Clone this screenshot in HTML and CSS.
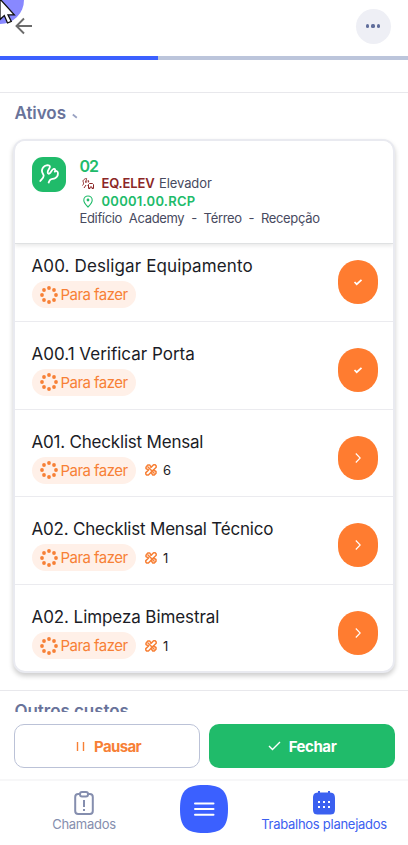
FILE: index.html
```html
<!DOCTYPE html>
<html lang="pt-BR">
<head>
<meta charset="utf-8">
<title>Trabalhos planejados</title>
<link rel="stylesheet" href="styles.css">
</head>
<body>
<svg width="0" height="0" class="defs">
  <symbol id="todo" viewBox="0 0 18 18"><g fill="currentColor"><circle cx="9" cy="2" r="1.900"/><circle cx="14" cy="4" r="1.900"/><circle cx="16" cy="9" r="1.900"/><circle cx="14" cy="14" r="1.900"/><circle cx="9" cy="16" r="1.900"/><circle cx="4" cy="14" r="1.900"/><circle cx="2" cy="9" r="1.900"/><circle cx="4" cy="4" r="1.900"/></g></symbol>
  <symbol id="parts" viewBox="0 0 12 12"><g fill="none" stroke="currentColor" stroke-width="1.5" stroke-linejoin="round" stroke-linecap="round"><path d="M1 3.200 2.800 1h2L6 3.400 8.600.8h1.600l1 1.200v1.200L3.400 11H1.600L.8 10V8.600L3.600 6 1 4.600Z"/><path d="M8.300 6 11 7.500v1.800L9.300 11H7.800L6 8.300M3 3l6 6"/></g></symbol>
  <symbol id="check" viewBox="0 0 10 8"><path d="m1.500 4 2.200 2.200 4.800-4.400" fill="none" stroke="currentColor" stroke-width="1.700"/></symbol>
  <symbol id="next" viewBox="0 0 8 12"><path d="m1.800 1.500 4.400 4.500-4.400 4.500" fill="none" stroke="currentColor" stroke-width="1.100"/></symbol>
  <symbol id="asset" viewBox="0 0 20 20"><path d="M1.300 17C3 15 5.200 13.500 4.600 11.300 4.200 9.800 2.600 8.500 3 6.200 3.400 3.800 5 2 7.500 1.400 9.500.9 11.300 1.700 10.800 3.300 10.300 5 8.800 6.300 8.700 8c-.1 1.800 1.300 2.300 2.500.9 1.300-1.500 1.800-3.600 3.600-4 1.500-.2 1.700 1.300 1 2.700.9-.9 2.700-.8 3 .8.400 2.200-.8 4.800-2.800 5.800-1.700.9-3.500.5-4.700 1.500-.8.700-1 1.500-1.600 2.800" fill="none" stroke="currentColor" stroke-width="1.800" stroke-linecap="round" stroke-linejoin="round"/></symbol>
</svg>
<header class="top">
  <svg class="back" width="18" height="18" viewBox="0 0 18 18"><path d="M17 9H2M9 1.500 1.500 9 9 16.500" fill="none" stroke="currentColor" stroke-width="1.900"/></svg>
  <button class="more"><i></i><i></i><i></i></button>
  <svg class="pointer" width="26" height="26" viewBox="0 0 26 26"><circle cx="0" cy="0" r="24" fill="#8888ff"/><path d="M0-1v20.500l4.300-4 3.200 7.500 3.800-1.600L8 14.800h6.300Z" fill="#fff" stroke="#111" stroke-width="1.300"/></svg>
</header>
<div class="progress"><div class="done"></div></div>
<main>
  <h2 class="sect">Ativos <svg width="6" height="6" viewBox="0 0 6 6"><path d="m.8 1.500 4 3.200" stroke="#99a2c2" stroke-width="1.800"/></svg></h2>
  <section class="card">
    <div class="head">
      <div class="logo"><svg width="20" height="20"><use href="#asset"/></svg></div>
      <div class="info">
        <div class="num">02</div>
        <div class="line code"><svg width="14" height="13" viewBox="0 0 14 13"><g fill="none" stroke="currentColor" stroke-width="1"><path d="M1.500 8.500C4 6 1 4.500 2.500 3 4 1.500 6.500.8 5.500 2.500L4.500 5C4.500 6.200 5.500 5 7 3.500l.8.500-.5 1.500M3 11l2-3"/><path d="M7.500 11.500v-4l1-1h3l1 1v4H11V10H9v1.500ZM6.500 8.500h1"/></g></svg><b>EQ.ELEV</b><span>Elevador</span></div>
        <div class="line loc"><svg width="14" height="13" viewBox="0 0 14 13"><path d="M7 12C4.500 9.500 2.800 7.500 2.800 5.200a4.200 4.200 0 0 1 8.400 0C11.200 7.500 9.500 9.500 7 12Z" fill="none" stroke="currentColor" stroke-width="1.100"/><circle cx="7" cy="5" r="1.400" fill="currentColor"/></svg><b>00001.00.RCP</b></div>
        <div class="place">Edifício Academy - Térreo - Recepção</div>
      </div>
    </div>
    <ul class="rows">
      <li><div><h3 class="t1">A00. Desligar Equipamento</h3><div class="meta"><span class="tag"><svg width="18" height="18"><use href="#todo"/></svg><span>Para fazer</span></span></div></div><button class="go"><svg width="10" height="8"><use href="#check"/></svg></button></li>
      <li><div><h3 class="t2">A00.1 Verificar Porta</h3><div class="meta"><span class="tag"><svg width="18" height="18"><use href="#todo"/></svg><span>Para fazer</span></span></div></div><button class="go"><svg width="10" height="8"><use href="#check"/></svg></button></li>
      <li><div><h3 class="t3">A01. Checklist Mensal</h3><div class="meta"><span class="tag"><svg width="18" height="18"><use href="#todo"/></svg><span>Para fazer</span></span><svg class="parts" width="12" height="12"><use href="#parts"/></svg><span class="count">6</span></div></div><button class="go"><svg width="8" height="12"><use href="#next"/></svg></button></li>
      <li><div><h3 class="t4">A02. Checklist Mensal Técnico</h3><div class="meta"><span class="tag"><svg width="18" height="18"><use href="#todo"/></svg><span>Para fazer</span></span><svg class="parts" width="12" height="12"><use href="#parts"/></svg><span class="count">1</span></div></div><button class="go"><svg width="8" height="12"><use href="#next"/></svg></button></li>
      <li><div><h3 class="t5">A02. Limpeza Bimestral</h3><div class="meta"><span class="tag"><svg width="18" height="18"><use href="#todo"/></svg><span>Para fazer</span></span><svg class="parts" width="12" height="12"><use href="#parts"/></svg><span class="count">1</span></div></div><button class="go"><svg width="8" height="12"><use href="#next"/></svg></button></li>
    </ul>
  </section>
  <h2 class="sect costs">Outros custos</h2>
</main>
<div class="actions">
  <button class="pause"><svg width="10" height="11" viewBox="0 0 10 11"><path d="M1.500 1v9M7.500 1v9" stroke="currentColor" stroke-width="1.400"/></svg><span>Pausar</span></button>
  <button class="close"><svg width="13" height="10" viewBox="0 0 13 10"><path d="m1 5 3.500 3.500L12 1" fill="none" stroke="currentColor" stroke-width="1.400"/></svg><span>Fechar</span></button>
</div>
<nav class="nav">
  <a class="item"><svg width="20" height="24" viewBox="0 0 20 24"><g fill="none" stroke="currentColor" stroke-width="2"><rect x="1.200" y="3" width="17.600" height="20" rx="3"/><rect x="6" y="1" width="8" height="4.500" rx="2" fill="#fff"/><path d="M10 9v7M10 18v2"/></g></svg><span class="calls">Chamados</span></a>
  <a class="menu"><svg width="48" height="48" viewBox="0 0 48 48"><path d="M24 0C42 0 48 6 48 24S42 48 24 48 0 42 0 24 6 0 24 0Z" fill="#3b60ff"/><path d="M15 18.500h18.500M15 24h18.500M15 29.800h18.500" stroke="#fff" stroke-width="2" stroke-linecap="round"/></svg></a>
  <a class="item active"><svg width="22" height="24" viewBox="0 0 22 24"><path d="M5 0h2v1.500h8V0h2v1.500c4 .3 5 2 5 6v10c0 5-1 6-6 6H6c-5 0-6-1-6-6v-10c0-4 1-5.700 5-6Z" fill="currentColor"/><g fill="#fff"><path d="M5 10h2v2H5zM10 10h2v2h-2zM15 10h2v2h-2zM5 15h2v2H5zM10 15h2v2h-2zM15 15h2v2h-2z"/></g></svg><span class="jobs">Trabalhos planejados</span></a>
</nav>
</body>
</html>
```
FILE: styles.css
```css
* { box-sizing: border-box; margin: 0; padding: 0; }
html, body { height: 845px; overflow: hidden; }
body { display: flex; flex-direction: column; background: #fff; font-family: Inter, "Open Sans", sans-serif; color: #1b1c26; }
button { border: 0; font: inherit; }
svg { display: block; flex: none; }
.defs { position: absolute; }
.top { position: relative; height: 56px; flex: none; display: flex; align-items: center; justify-content: space-between; padding: 0 17.500px 4px 15px; }
.back { color: #6b6b6b; }
.more { width: 35px; height: 35px; border-radius: 50%; background: #eeeff5; display: flex; align-items: center; justify-content: center; gap: 2px; }
.more i { width: 3.200px; height: 3.200px; border-radius: 50%; background: #606d9b; }
.pointer { position: absolute; left: 0; top: 0; }
.progress { height: 4px; flex: none; background: #bcc5db; }
.done { width: 158px; height: 4px; background: #3b60ff; }
main { height: 652px; flex: none; overflow: hidden; padding-top: 32px; }
.sect { height: 48px; border-top: 1px solid #e8e8ec; padding: 0 14.500px; display: flex; gap: 6px; font-size: 17px; line-height: 40px; font-weight: 600; color: #69739a; letter-spacing: -.05px; }
.sect svg { margin-top: 20px; }
.card { width: 382px; height: 534px; margin-left: 13px; margin-top: -1px; border: 2px solid #e9eaf0; border-radius: 12px; overflow: hidden; box-shadow: 0 3px 5px rgba(0,0,0,.2); background: #fff; }
.head { position: relative; height: 103px; padding: 16px 16.500px; display: flex; gap: 14px; background: #fff; border-bottom: 1px solid #dfe1e2; box-shadow: 0 2px 4px rgba(0,0,0,.09); }
.logo { width: 34.500px; height: 34.500px; border-radius: 11px; background: #20bb6a; color: #fff; display: flex; align-items: center; justify-content: center; }
.info { margin-left: -.5px; }
.num { height: 18px; line-height: 19px; font-size: 16px; font-weight: 600; color: #20bb6a; letter-spacing: -1.100px; }
.line { height: 17.500px; display: flex; align-items: center; font-size: 13px; line-height: 17.500px; color: #474a60; }
.line svg { margin: 0 7px 0 1px; }
.line b { font-weight: 600; }
.code svg, .code b { color: #8b2626; }
.code b { width: 57.500px; letter-spacing: -.15px; }
.code span { letter-spacing: -.1px; }
.loc { color: #20bb6a; }
.loc b { letter-spacing: .25px; }
.place { font-size: 13px; line-height: 17px; color: #474a60; word-spacing: 3.500px; white-space: nowrap; letter-spacing: -.34px; }
.rows { list-style: none; margin-top: -10px; }
.rows li { height: 87.750px; padding: 20px 15.500px 0 16.500px; display: flex; justify-content: space-between; border-bottom: 1px solid #ebebef; }
.rows li:last-child { border-bottom: 0; }
h3 { font-size: 17px; line-height: 24px; font-weight: 400; white-space: nowrap; }
.t1 { letter-spacing: .12px; }
.t2 { letter-spacing: 0; }
.t3, .t4 { letter-spacing: -.2px; }
.t5 { letter-spacing: -.08px; }
.meta { display: flex; align-items: center; margin-top: 3px; }
.tag { width: 104px; height: 27px; border-radius: 14px; background: #fff0e8; color: #f78036; display: flex; align-items: center; padding-left: 8px; gap: 3px; font-size: 15px; letter-spacing: -.55px; white-space: nowrap; }
.parts { color: #f78036; margin: 0 6px 0 9.500px; }
.count { font-size: 13px; }
.go { width: 40px; height: 44px; margin-top: 6px; border-radius: 20px; background: #ff7c30; color: #fff; display: flex; align-items: center; justify-content: center; flex: none; }
.costs { margin-top: 17px; height: 40px; }
.actions { flex: none; height: 67px; padding: 12px 13px 11px 14px; display: flex; gap: 9px; }
.actions button { flex: 1; border-radius: 10px; display: flex; align-items: center; justify-content: center; gap: 8px; font-size: 15px; font-weight: 700; letter-spacing: -.45px; }
.actions .pause { flex: none; width: 186px; background: #fff; border: 1px solid #bbc2d7; color: #f78036; letter-spacing: -.65px; padding-left: 3px; }
.close { background: #20bb6a; color: #fff; }
.nav { flex: none; height: 66px; border-top: 2px solid #f7f7f8; display: grid; grid-template-columns: 168px 72px 168px; }
.item { display: flex; flex-direction: column; align-items: center; color: #858eae; font-size: 13px; padding-top: 10px; white-space: nowrap; }
.item span { line-height: 18px; letter-spacing: -.27px; }
.active { color: #3b60f0; }
.menu { display: flex; justify-content: center; padding-top: 3.500px; }
```
